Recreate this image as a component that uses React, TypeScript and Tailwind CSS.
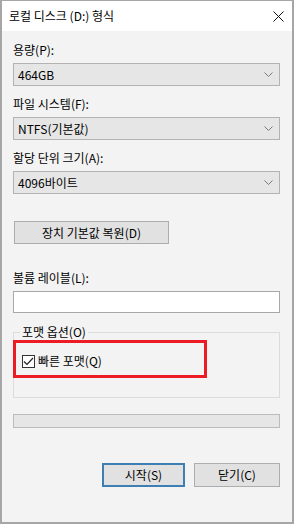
import React from 'react';

const font = { fontFamily: '"Noto Sans CJK KR", "Noto Sans", sans-serif' };

const Chevron = () => (
  <svg width="9" height="5" viewBox="0 0 9 5" className="shrink-0">
    <path d="M0.5 0.5 L4.5 4.5 L8.5 0.5" fill="none" stroke="#7a7a7a" strokeWidth="1" />
  </svg>
);

const Combo = ({ value, className = '' }: { value: string; className?: string }) => (
  <div className={`mt-[5px] flex h-[23px] items-center justify-between border border-[#b3b3b3] bg-[#e6e6e6] pl-[4px] pr-[6px] text-[12px] leading-[16px] text-black ${className}`}>
    <span>{value}</span>
    <Chevron />
  </div>
);

export default function App() {
  return (
    <div style={font} className="flex h-[524px] w-[294px] flex-col overflow-hidden border-x-2 border-b-2 border-t border-[#a6a6a6] bg-[#f3f3f3] text-black">
      {/* title bar */}
      <div className="flex h-[30px] shrink-0 items-center justify-between bg-white pl-[7px] pr-[8px]">
        <span className="text-[12px] leading-[16px]">로컬 디스크 (D:) 형식</span>
        <svg width="11" height="11" viewBox="0 0 11 11">
          <path d="M0.5 0.5 L10.5 10.5 M10.5 0.5 L0.5 10.5" stroke="#111" strokeWidth="1" />
        </svg>
      </div>

      <div className="flex flex-col pl-[11px] pr-[12px] text-[12px] leading-[16px]">
        <div className="mt-[11px]">용량(P):</div>
        <Combo value="464GB" />

        <div className="mt-[10px]">파일 시스템(F):</div>
        <Combo value="NTFS(기본값)" />

        <div className="mt-[10px]">할당 단위 크기(A):</div>
        <Combo value="4096바이트" />

        <button className="ml-[1px] mt-[27px] flex h-[23px] w-[155px] items-center justify-center border border-[#adadad] bg-[#e1e1e1] text-[12px]">
          장치 기본값 복원(D)
        </button>

        <div className="mt-[26px]">볼륨 레이블(L):</div>
        <div className="mt-[5px] h-[22px] border border-[#a8a8a8] bg-white" />

        {/* format options group */}
        <div className="relative mt-[19px] h-[66px] border border-[#dcdcdc]">
          <span className="absolute -top-[9px] left-[6px] bg-[#f3f3f3] px-[2px]">포맷 옵션(O)</span>
          <div className="ml-[8px] mt-[20px] flex items-center gap-[3px]">
            <span className="flex h-[13px] w-[13px] items-center justify-center border border-[#333] bg-white">
              <svg width="11" height="9" viewBox="0 0 11 9">
                <path d="M1 4.5 L4 7.5 L10 1" fill="none" stroke="#222" strokeWidth="1.2" />
              </svg>
            </span>
            <span>빠른 포맷(Q)</span>
          </div>
          <div className="absolute -left-[1px] top-[7px] h-[38px] w-[194px] border-[3px] border-[#ed1c24]" />
        </div>

        <div className="mt-[16px] h-[14px] border border-[#bcbcbc] bg-[#e6e6e6]" />

        <div className="mt-[35px] flex justify-end gap-[9px]">
          <button className="flex h-[24px] w-[83px] items-center justify-center border-2 border-[#3d7eb3] bg-[#e1e1e1] text-[12px]">
            시작(S)
          </button>
          <button className="flex h-[24px] w-[86px] items-center justify-center border border-[#adadad] bg-[#e1e1e1] text-[12px]">
            닫기(C)
          </button>
        </div>
      </div>
    </div>
  );
}
